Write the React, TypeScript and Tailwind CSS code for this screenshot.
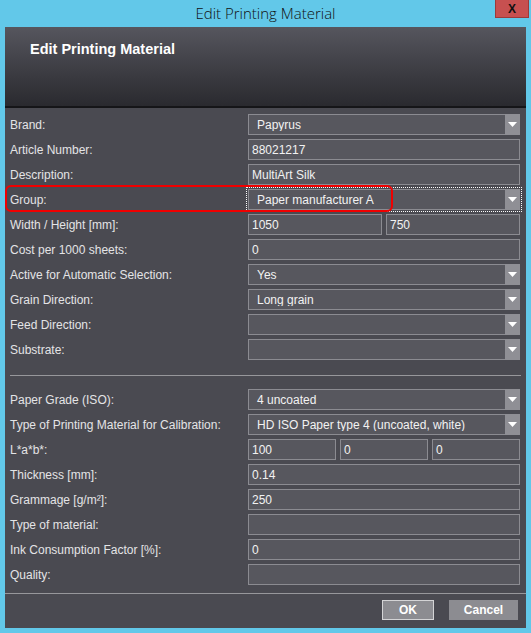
import React from "react";

const font = "font-['Liberation_Sans',Arial,sans-serif]";

function Arrow() {
  return (
    <div className="w-[15px] self-stretch bg-[#8f8f95] flex items-center justify-center -my-px -mr-px">
      <svg width="9" height="5" viewBox="0 0 9 5">
        <path d="M0 0 H9 L4.5 5 Z" fill="#ffffff" />
      </svg>
    </div>
  );
}

function Select({ value, focused }: { value: string; focused?: boolean }) {
  return (
    <div
      className={`flex-1 h-[21px] flex items-center bg-[#57575e] border border-[#8b8b91] ${
        focused ? "outline-1 outline-dotted outline-white outline-offset-1" : ""
      }`}
    >
      <div className="flex-1 pl-[8px] text-[12px] text-[#f2f2f2] leading-none truncate">{value}</div>
      <Arrow />
    </div>
  );
}

function Input({ value }: { value?: string }) {
  return (
    <div className="flex-1 h-[21px] flex items-center bg-[#57575e] border border-[#8b8b91] pl-[3px] text-[12px] text-[#f2f2f2] leading-none">
      {value ?? ""}
    </div>
  );
}

function Row({
  label,
  children,
  annotate,
}: {
  label: string;
  children: React.ReactNode;
  annotate?: boolean;
}) {
  return (
    <div className="relative flex items-center h-[21px] pl-[5px] pr-[6px]">
      <div className="flex-1 text-[12px] text-[#e4e4e6] leading-none">{label}</div>
      <div className="w-[272px] flex gap-[4px]">{children}</div>
      {annotate && (
        <div className="absolute left-0 top-[-4px] w-[388px] h-[27px] border-2 border-[#f00000] rounded-[6px] pointer-events-none" />
      )}
    </div>
  );
}

export default function App() {
  return (
    <div className={`w-[531px] h-[633px] bg-[#62c8e9] flex flex-col ${font}`}>
      {/* title bar */}
      <div className="relative h-[27px] flex items-center justify-center">
        <span className="font-['Open_Sans',sans-serif] font-light text-[15px] text-[#111] leading-none pb-[1px]">
          Edit Printing Material
        </span>
        <div className="absolute right-[2px] top-0 w-[34px] h-[18px] bg-[#c75050] border border-[#9c3a3a] border-t-0 flex items-center justify-center">
          <span className="text-[12px] font-bold text-[#111] leading-none">X</span>
        </div>
      </div>

      {/* panel */}
      <div className="mx-[5px] flex-1 mb-[5px] bg-[#4a4a51] flex flex-col">
        <div className="h-[79px] bg-gradient-to-b from-[#56565e] to-[#2a2a2f] pl-[25px] pt-[15px]">
          <div className="text-[14.5px] font-bold text-white leading-none">Edit Printing Material</div>
        </div>
        <div className="h-[2px] bg-[#151518]" />

        <div className="flex flex-col gap-[4px] pt-[6px]">
          <Row label="Brand:">
            <Select value="Papyrus" />
          </Row>
          <Row label="Article Number:">
            <Input value="88021217" />
          </Row>
          <Row label="Description:">
            <Input value="MultiArt Silk" />
          </Row>
          <Row label="Group:" annotate>
            <Select value="Paper manufacturer A" focused />
          </Row>
          <Row label="Width / Height [mm]:">
            <Input value="1050" />
            <Input value="750" />
          </Row>
          <Row label="Cost per 1000 sheets:">
            <Input value="0" />
          </Row>
          <Row label="Active for Automatic Selection:">
            <Select value="Yes" />
          </Row>
          <Row label="Grain Direction:">
            <Select value="Long grain" />
          </Row>
          <Row label="Feed Direction:">
            <Select value="" />
          </Row>
          <Row label="Substrate:">
            <Select value="" />
          </Row>
        </div>

        <div className="mx-[5px] mr-[5px] h-px bg-[#97979b] mt-[15px] mb-[13px]" />

        <div className="flex flex-col gap-[4px]">
          <Row label="Paper Grade (ISO):">
            <Select value="4 uncoated" />
          </Row>
          <Row label="Type of Printing Material for Calibration:">
            <Select value="HD ISO Paper type 4 (uncoated, white)" />
          </Row>
          <Row label="L*a*b*:">
            <Input value="100" />
            <Input value="0" />
            <Input value="0" />
          </Row>
          <Row label="Thickness [mm]:">
            <Input value="0.14" />
          </Row>
          <Row label="Grammage [g/m²]:">
            <Input value="250" />
          </Row>
          <Row label="Type of material:">
            <Input />
          </Row>
          <Row label="Ink Consumption Factor [%]:">
            <Input value="0" />
          </Row>
          <Row label="Quality:">
            <Input />
          </Row>
        </div>

        <div className="h-px bg-[#97979b] mt-[8px]" />

        <div className="flex justify-end gap-[15px] pr-[8px] pt-[6px]">
          <div className="w-[52px] h-[20px] bg-[#8c8c91] border border-[#d4d4d6] flex items-center justify-center text-[12px] font-bold text-white leading-none">
            OK
          </div>
          <div className="w-[69px] h-[20px] bg-[#8c8c91] flex items-center justify-center text-[12px] font-bold text-white leading-none">
            Cancel
          </div>
        </div>
      </div>
    </div>
  );
}
